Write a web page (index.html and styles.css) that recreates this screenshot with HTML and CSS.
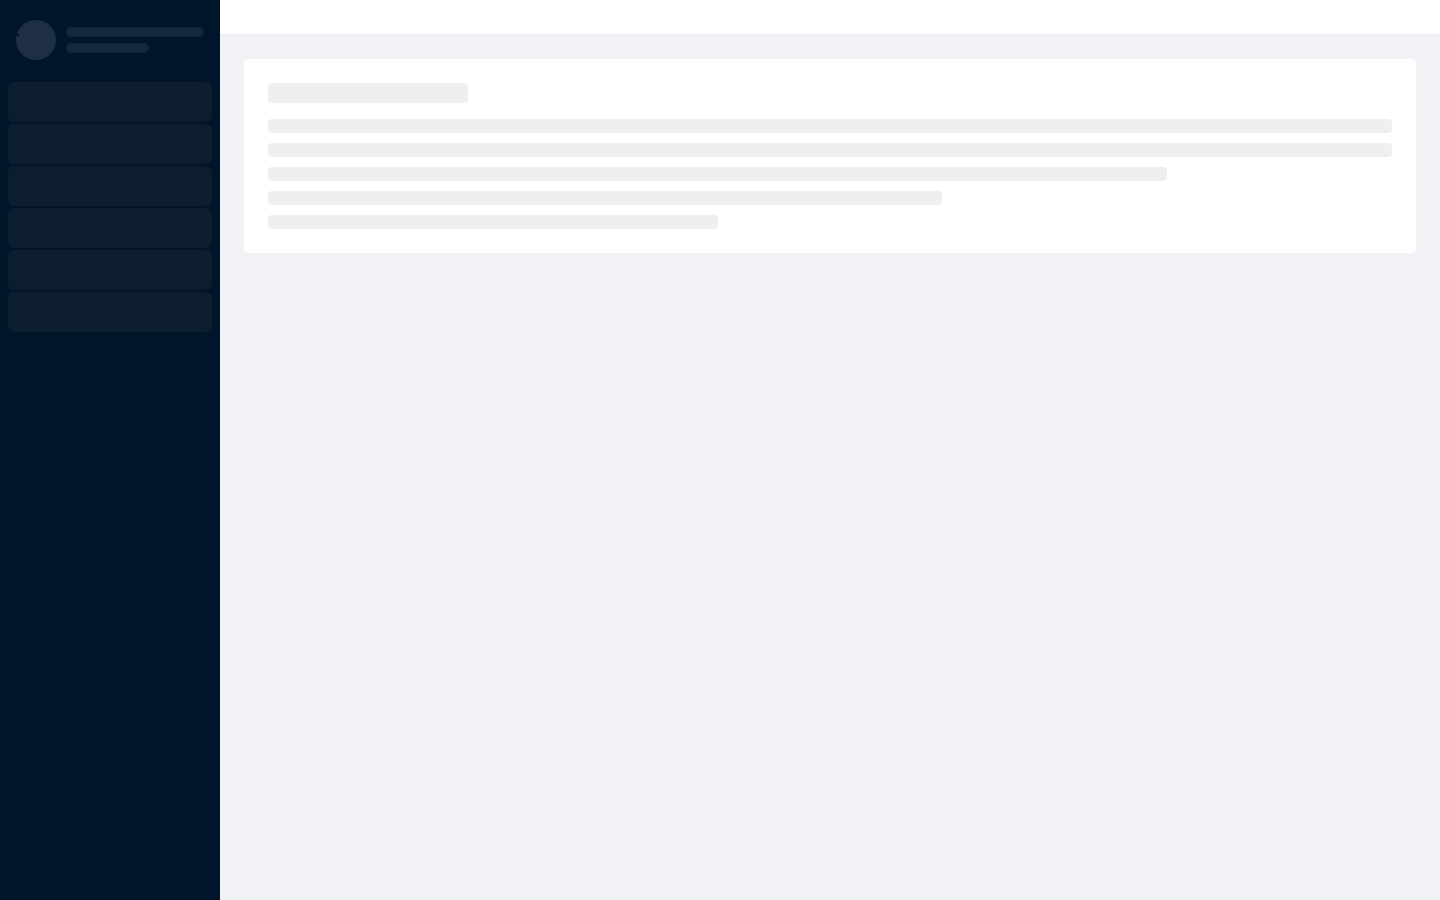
FILE: index.html
```html
<!DOCTYPE html>
<html lang="en">
<head>
<meta charset="utf-8">
<title>Loading</title>
<link rel="stylesheet" href="styles.css">
</head>
<body>
<div class="layout">
  <aside class="sider">
    <div class="profile">
      <div class="avatar"><span class="avatar-dot"></span></div>
      <div class="profile-lines">
        <div class="pline pline-long"></div>
        <div class="pline pline-short"></div>
      </div>
    </div>
    <nav class="menu">
      <div class="menu-item"></div>
      <div class="menu-item"></div>
      <div class="menu-item"></div>
      <div class="menu-item"></div>
      <div class="menu-item"></div>
      <div class="menu-item"></div>
    </nav>
  </aside>
  <div class="main">
    <header class="header"></header>
    <section class="content">
      <div class="card">
        <div class="sk-title"></div>
        <div class="sk-paragraph">
          <div class="sk-line w100"></div>
          <div class="sk-line w100"></div>
          <div class="sk-line w80"></div>
          <div class="sk-line w60"></div>
          <div class="sk-line w40"></div>
        </div>
      </div>
    </section>
  </div>
</div>
</body>
</html>
```
FILE: styles.css
```css
* { box-sizing: border-box; }
html, body { margin: 0; padding: 0; height: 100%; }
body { font-family: "Liberation Sans", Arial, sans-serif; background: #f0f2f5; }

.layout { display: flex; height: 900px; }

.sider {
  width: 220px;
  flex: 0 0 220px;
  background: #001529;
  padding: 20px 8px 0 8px;
}
.profile {
  display: flex;
  align-items: flex-start;
  gap: 10px;
  padding-left: 8px;
  height: 40px;
}
.avatar {
  position: relative;
  width: 40px;
  height: 40px;
  border-radius: 50%;
  background: #1e2f45;
  flex: 0 0 40px;
}
.avatar-dot {
  position: absolute;
  left: 1px;
  top: 14px;
  width: 2px;
  height: 2px;
  background: #000;
  border-radius: 1px;
}
.profile-lines {
  display: flex;
  flex-direction: column;
  gap: 6px;
  padding-top: 7px;
}
.pline { height: 10px; border-radius: 5px; background: #13263b; }
.pline-long { width: 138px; }
.pline-short { width: 83px; }

.menu {
  margin-top: 22px;
  display: flex;
  flex-direction: column;
  gap: 2px;
}
.menu-item {
  height: 40px;
  border-radius: 6px;
  background: #0b1d2f;
}

.main { flex: 1; display: flex; flex-direction: column; min-width: 0; }
.header {
  height: 35px;
  background: #fff;
  border-bottom: 1px solid #eceef2;
}
.content { padding: 24px; }
.card {
  background: #fff;
  border-radius: 4px;
  padding: 24px;
}
.sk-title {
  width: 200px;
  height: 20px;
  border-radius: 4px;
  background: #efefef;
}
.sk-paragraph {
  margin-top: 16px;
  display: flex;
  flex-direction: column;
  gap: 10px;
}
.sk-line {
  height: 14px;
  border-radius: 4px;
  background: #efefef;
}
.w100 { width: 100%; }
.w80 { width: 80%; }
.w60 { width: 60%; }
.w40 { width: 40%; }
```
